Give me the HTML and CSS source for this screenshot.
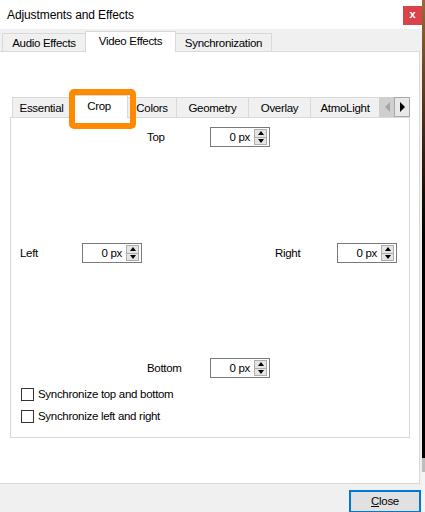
FILE: index.html
```html
<!DOCTYPE html>
<html>
<head>
<meta charset="utf-8">
<title>Adjustments and Effects</title>
<link rel="stylesheet" href="styles.css">
</head>
<body>
<div class="window">
  <div class="titlebar">
    <span class="title">Adjustments and Effects</span>
    <span class="close-x">x</span>
  </div>
  <div class="tabs outer-tabs">
    <div class="tab t-audio">Audio Effects</div>
    <div class="tab active t-video">Video Effects</div>
    <div class="tab t-sync">Synchronization</div>
  </div>
  <div class="outer-pane">
    <div class="tabs inner-tabs">
      <div class="tab t-ess">Essential</div>
      <div class="tab active t-crop">Crop<span class="highlight"></span></div>
      <div class="tab t-colors">Colors</div>
      <div class="tab t-geo">Geometry</div>
      <div class="tab t-overlay">Overlay</div>
      <div class="tab t-atmo">AtmoLight</div>
      <div class="scroll-btn disabled"><span class="tri-left"></span></div>
      <div class="scroll-btn"><span class="tri-right"></span></div>
    </div>
    <div class="inner-pane">
      <div class="row row-top">
        <span class="lbl lbl-center">Top</span>
        <div class="spin"><span class="val">0 px</span><span class="btns"><span class="half"><span class="tri-up"></span></span><span class="half"><span class="tri-down"></span></span></span></div>
      </div>
      <div class="row row-mid">
        <span class="lbl lbl-left">Left</span>
        <div class="spin"><span class="val">0 px</span><span class="btns"><span class="half"><span class="tri-up"></span></span><span class="half"><span class="tri-down"></span></span></span></div>
        <span class="lbl lbl-right">Right</span>
        <div class="spin"><span class="val">0 px</span><span class="btns"><span class="half"><span class="tri-up"></span></span><span class="half"><span class="tri-down"></span></span></span></div>
      </div>
      <div class="row row-bottom">
        <span class="lbl lbl-center">Bottom</span>
        <div class="spin"><span class="val">0 px</span><span class="btns"><span class="half"><span class="tri-up"></span></span><span class="half"><span class="tri-down"></span></span></span></div>
      </div>
      <label class="check-row"><span class="box"></span><span>Synchronize top and bottom</span></label>
      <label class="check-row"><span class="box"></span><span>Synchronize left and right</span></label>
    </div>
  </div>
  <div class="footer">
    <button class="btn-close"><span class="ul">C</span>lose</button>
  </div>
</div>
</body>
</html>
```
FILE: styles.css
```css
* { box-sizing: border-box; }
html, body { margin: 0; padding: 0; }
body {
  width: 425px;
  height: 512px;
  overflow: hidden;
  font-family: "Liberation Sans", Arial, sans-serif;
  font-size: 11.5px;
  letter-spacing: -0.3px;
  color: #000;
  background: linear-gradient(to bottom, #9a6a3a 0, #4a2e18 120px, #140c06 200px, #000 240px, #000 458px, #bdbdbd 458px, #bdbdbd 472px, #f4f4f4 472px);
}
.window {
  width: 422px;
  height: 512px;
  background: #f0f0f0;
  display: flex;
  flex-direction: column;
}
.titlebar {
  height: 29px;
  flex: none;
  background: #fff;
  display: flex;
  align-items: center;
  padding-left: 7px;
}
.title { font-size: 12px; letter-spacing: -0.1px; }
.close-x {
  margin-left: auto;
  width: 19px;
  height: 19px;
  margin-top: 2px;
  background: #d9434a;
  color: #fff;
  font-weight: bold;
  font-size: 11px;
  letter-spacing: 0;
  display: flex;
  align-items: center;
  justify-content: center;
  line-height: 1;
  padding-bottom: 2px;
}
.tabs {
  display: flex;
  align-items: flex-end;
  flex: none;
  position: relative;
  z-index: 1;
}
.tab {
  border: 1px solid #d9d9d9;
  border-bottom: none;
  background: #f0f0f0;
  display: flex;
  align-items: center;
  justify-content: center;
  margin-left: -1px;
  white-space: nowrap;
}
.tab.active {
  background: #fff;
  margin-bottom: -1px;
}
.outer-tabs {
  height: 22px;
  padding-left: 3px;
}
.outer-tabs .tab { height: 18px; }
.outer-tabs .tab.active { height: 21px; padding-bottom: 2px; }
.t-audio { width: 84px; }
.t-video { width: 91px; }
.t-sync { width: 97px; }

.outer-pane {
  width: 420px;
  height: 433px;
  flex: none;
  background: #fff;
  border: 1px solid #d9d9d9;
  border-left: none;
  padding: 43px 0 0 10px;
}
.inner-tabs {
  height: 22px;
  padding-left: 3px;
}
.inner-tabs .tab { height: 20px; }
.inner-tabs .tab.active { height: 23px; position: relative; padding-bottom: 2px; }
.t-ess { width: 59px; }
.t-crop { width: 58px; }
.t-colors { width: 50px; }
.t-geo { width: 73px; }
.t-overlay { width: 63px; }
.t-atmo { width: 70px; overflow: hidden; }
.highlight {
  position: absolute;
  left: -2px;
  top: -7px;
  width: 67px;
  height: 40px;
  border: 6px solid #ff8a00;
  border-radius: 5px;
  pointer-events: none;
}
.scroll-btn {
  width: 16px;
  height: 20px;
  border: 1px solid #a8a8a8;
  background: #e8e8e8;
  display: flex;
  align-items: center;
  justify-content: center;
  margin-left: -1px;
}
.scroll-btn.disabled {
  background: #cfcfcf;
  border-color: #cfcfcf;
}
.tri-left {
  width: 0; height: 0;
  border-top: 5px solid transparent;
  border-bottom: 5px solid transparent;
  border-right: 5px solid #a6a6a6;
}
.tri-right {
  width: 0; height: 0;
  border-top: 5px solid transparent;
  border-bottom: 5px solid transparent;
  border-left: 5px solid #000;
}
.inner-pane {
  width: 400px;
  height: 321px;
  border: 1px solid #d9d9d9;
  background: #fff;
  display: flex;
  flex-direction: column;
  padding-top: 9px;
}
.row {
  display: flex;
  align-items: center;
  height: 20px;
  flex: none;
}
.row-top { padding-left: 136px; margin-bottom: 96px; }
.row-mid { padding-left: 9px; margin-bottom: 95px; }
.row-bottom { padding-left: 136px; margin-bottom: 5px; }
.lbl-center { width: 63px; }
.lbl-left { width: 62px; }
.lbl-right { width: 62px; margin-left: 133px; }
.spin {
  width: 60px;
  height: 20px;
  border: 1px solid #7a7a7a;
  background: #fff;
  display: flex;
  align-items: center;
  padding-right: 2px;
}
.val {
  flex: 1;
  text-align: right;
  padding-right: 4px;
}
.btns {
  width: 13px;
  height: 16px;
  border: 1px solid #adadad;
  background: #e5e5e5;
  display: flex;
  flex-direction: column;
}
.half {
  flex: 1;
  display: flex;
  align-items: center;
  justify-content: center;
}
.half + .half { border-top: 1px solid #adadad; }
.tri-up {
  width: 0; height: 0;
  border-left: 3px solid transparent;
  border-right: 3px solid transparent;
  border-bottom: 4px solid #000;
}
.tri-down {
  width: 0; height: 0;
  border-left: 3px solid transparent;
  border-right: 3px solid transparent;
  border-top: 4px solid #000;
}
.check-row {
  display: flex;
  align-items: center;
  height: 22px;
  padding-left: 10px;
  gap: 4px;
  flex: none;
}
.box {
  width: 13px;
  height: 13px;
  border: 1px solid #333;
  background: #fff;
}
.footer {
  flex: 1;
  display: flex;
  align-items: flex-start;
  padding-top: 6px;
}
.btn-close {
  margin-left: auto;
  margin-right: 1px;
  width: 72px;
  height: 23px;
  border: 2px solid #0078d7;
  background: #e1e1e1;
  font-family: "Liberation Sans", Arial, sans-serif;
  font-size: 11.5px;
  letter-spacing: -0.3px;
  color: #000;
  padding: 0 0 2px;
  display: flex;
  align-items: center;
  justify-content: center;
}
.ul { text-decoration: underline; }
```
